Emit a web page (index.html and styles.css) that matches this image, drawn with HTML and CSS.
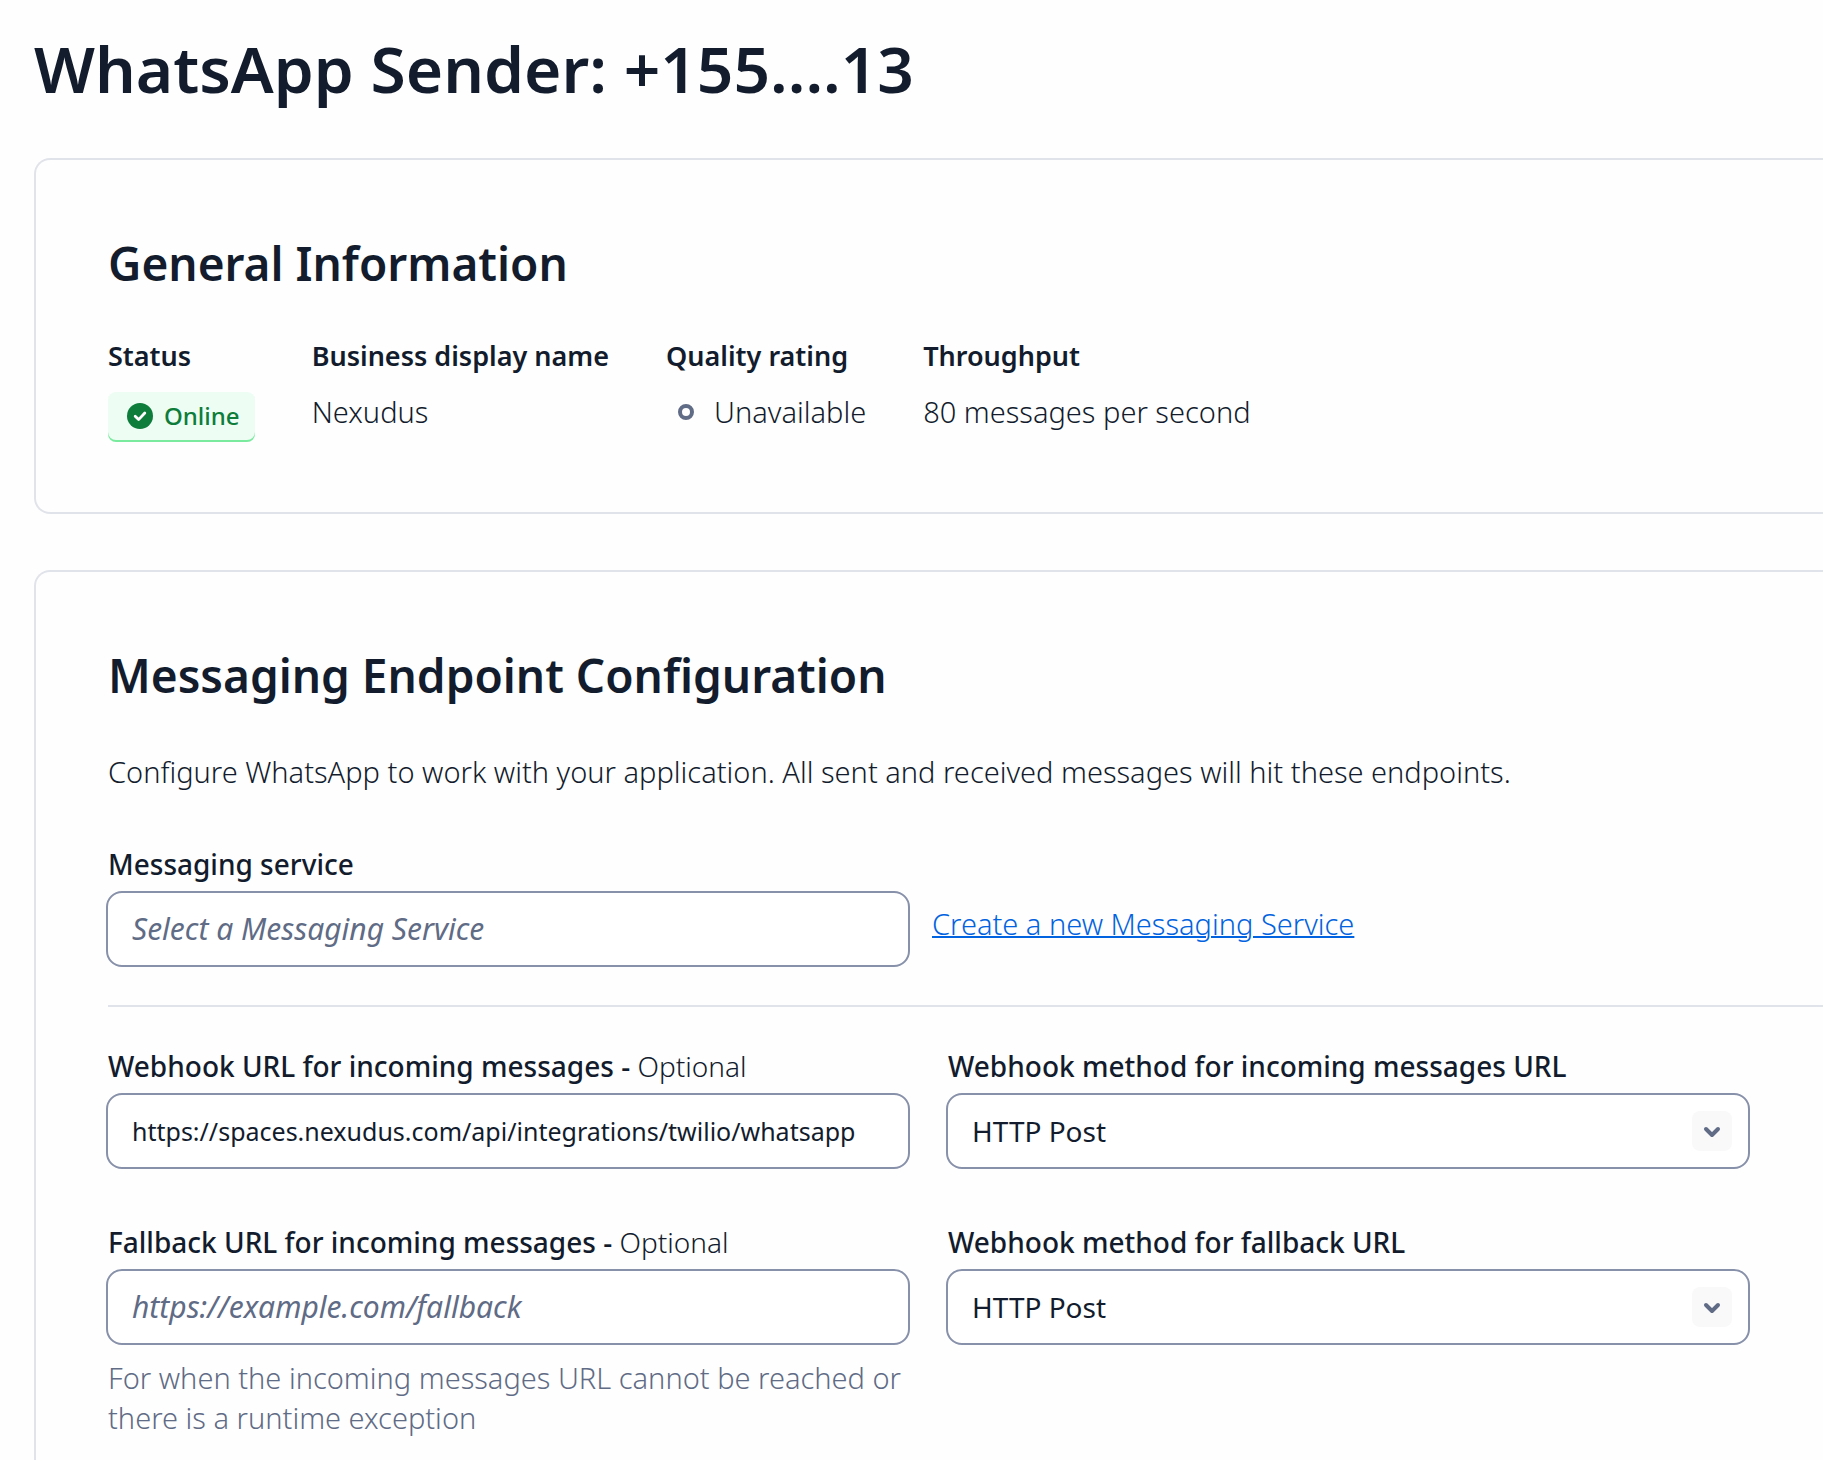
FILE: index.html
```html
<!DOCTYPE html>
<html lang="en">

<head>
    <meta charset="UTF-8">
    <meta name="viewport" content="width=device-width, initial-scale=1.0">
    <title>WhatsApp Sender</title>
    <link rel="stylesheet" href="styles.css">
</head>

<body>
    <main class="page">
        <h1>WhatsApp Sender: +155....13</h1>

        <section class="card">
            <h2>General Information</h2>
            <dl class="info">
                <div class="info-item">
                    <dt>Status</dt>
                    <dd class="badge">
                        <svg class="badge-icon" viewBox="0 0 26 26" aria-hidden="true">
                            <circle cx="13" cy="13" r="13" fill="#0e7c3a" />
                            <path d="M8.2 13.2l3.4 3.4 6.2-6.6" fill="none" stroke="#fff" stroke-width="2.8" stroke-linecap="round" stroke-linejoin="round" />
                        </svg>
                        Online
                    </dd>
                </div>
                <div class="info-item">
                    <dt>Business display name</dt>
                    <dd>Nexudus</dd>
                </div>
                <div class="info-item">
                    <dt>Quality rating</dt>
                    <dd class="rating"><span class="rating-dot"></span>Unavailable</dd>
                </div>
                <div class="info-item">
                    <dt>Throughput</dt>
                    <dd>80 messages per second</dd>
                </div>
            </dl>
        </section>

        <section class="card">
            <h2>Messaging Endpoint Configuration</h2>
            <p class="description">Configure WhatsApp to work with your application. All sent and received messages will hit these endpoints.</p>

            <form>
                <div class="service-row">
                    <div class="field">
                        <label for="service">Messaging service</label>
                        <input type="text" id="service" class="control" placeholder="Select a Messaging Service">
                    </div>
                    <a href="#" class="link">Create a new Messaging Service</a>
                </div>

                <hr class="divider">

                <div class="fields">
                    <div class="field">
                        <label for="webhook">Webhook URL for incoming messages - <span class="optional">Optional</span></label>
                        <input type="text" id="webhook" class="control control-url" value="https://spaces.nexudus.com/api/integrations/twilio/whatsapp">
                    </div>
                    <div class="field">
                        <label for="webhook-method">Webhook method for incoming messages URL</label>
                        <div class="select">
                            <select id="webhook-method" class="control">
                                <option>HTTP Post</option>
                                <option>HTTP Get</option>
                            </select>
                            <span class="select-icon">
                                <svg viewBox="0 0 40 40" aria-hidden="true"><path d="M14 18l6 6 6-6" /></svg>
                            </span>
                        </div>
                    </div>
                    <div class="field">
                        <label for="fallback">Fallback URL for incoming messages - <span class="optional">Optional</span></label>
                        <input type="text" id="fallback" class="control" placeholder="https://example.com/fallback" aria-describedby="fallback-help">
                        <p class="help" id="fallback-help">For when the incoming messages URL cannot be reached or there is a runtime exception</p>
                    </div>
                    <div class="field">
                        <label for="fallback-method">Webhook method for fallback URL</label>
                        <div class="select">
                            <select id="fallback-method" class="control">
                                <option>HTTP Post</option>
                                <option>HTTP Get</option>
                            </select>
                            <span class="select-icon">
                                <svg viewBox="0 0 40 40" aria-hidden="true"><path d="M14 18l6 6 6-6" /></svg>
                            </span>
                        </div>
                    </div>
                </div>
            </form>
        </section>
    </main>
</body>

</html>
```
FILE: styles.css
```css
* {
    box-sizing: border-box;
}

body {
    margin: 0;
    font-family: "Noto Sans", sans-serif;
    font-size: 29px;
    font-weight: 300;
    line-height: 40px;
    color: #121c2d;
    background: #fefefe;
}

h1,
h2,
p,
dl,
dd {
    margin: 0;
}

.page {
    padding: 29px 0 0 34px;
}

h1 {
    margin-bottom: 49px;
    font-size: 64px;
    font-weight: 600;
    line-height: 80px;
}

h2 {
    font-size: 46px;
    font-weight: 600;
    line-height: 62px;
}

/* cards run off the right side of the page */
.card {
    padding: 72px 0 70px 72px;
    border: 2px solid #e1e3ea;
    border-right: none;
    border-radius: 16px 0 0 16px;
}

.card + .card {
    margin-top: 56px;
}

.info {
    display: flex;
    gap: 57px;
    margin-top: 42px;
}

dt {
    margin-bottom: 16px;
    font-size: 27px;
    font-weight: 600;
}

.badge {
    display: flex;
    align-items: center;
    gap: 11px;
    height: 50px;
    padding: 0 15px 2px 19px;
    border-radius: 8px;
    background: #edfdf3;
    box-shadow: inset 0 -2px 0 #7aea9f;
    color: #0e7c3a;
    font-size: 24px;
    font-weight: 500;
}

.badge-icon {
    width: 26px;
    height: 26px;
}

.rating {
    display: flex;
    align-items: center;
    gap: 20px;
    padding-left: 12px;
}

.rating-dot {
    width: 16px;
    height: 16px;
    border: 4px solid #606b85;
    border-radius: 50%;
}

.description {
    margin-top: 46px;
}

.service-row {
    display: flex;
    align-items: flex-end;
    gap: 24px;
    margin: 52px 75px 0 0;
}

.service-row .field {
    width: calc(50% - 20px);
}

.link {
    margin-bottom: 23px;
    color: #0263e0;
    text-decoration-thickness: 2px;
}

.divider {
    height: 2px;
    margin: 38px 0 39px;
    border: none;
    background: #e1e3ea;
}

.fields {
    display: grid;
    grid-template-columns: 1fr 1fr;
    gap: 53px 40px;
    margin-right: 75px;
}

label {
    display: block;
    margin-bottom: 7px;
    font-size: 28px;
    font-weight: 500;
}

.optional {
    font-weight: 300;
}

.control {
    display: block;
    width: calc(100% + 4px);
    height: 76px;
    margin: 0 -2px;
    padding: 0 24px;
    border: 2px solid #8891aa;
    border-radius: 16px;
    background: #fff;
    color: #121c2d;
    font-family: inherit;
    font-size: 28px;
    font-weight: 400;
    appearance: none;
}

.control::placeholder {
    color: #606b85;
    font-size: 30px;
    font-style: italic;
    opacity: 1;
}

.control-url {
    font-size: 25px;
}

.select {
    position: relative;
}

.select-icon {
    position: absolute;
    top: 18px;
    right: 16px;
    width: 40px;
    height: 40px;
    border-radius: 8px;
    background: #f9f9fa;
    pointer-events: none;
}

.select-icon svg {
    display: block;
    fill: none;
    stroke: #606b85;
    stroke-width: 4;
    stroke-linecap: round;
    stroke-linejoin: round;
}

.help {
    margin-top: 13px;
    color: #606b85;
}
```
